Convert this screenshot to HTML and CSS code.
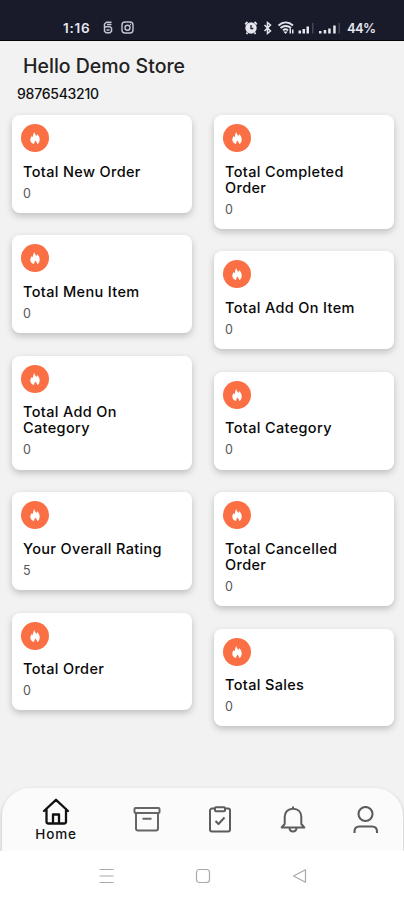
FILE: index.html
```
<!DOCTYPE html>
<html lang="en">
<head>
<meta charset="utf-8">
<title>Store dashboard</title>
<link rel="stylesheet" href="styles.css">
</head>
<body>
<svg width="0" height="0" class="defs">
  <symbol id="flame" viewBox="0 0 28 28">
    <path fill="#fff" d="M13.300 8c.4 2 1.200 2.900 2.200 4 .4-.6.500-1.200.5-1.900 1.900 1.500 2.700 3.400 2.700 5.300 0 2.300-1 3.900-2.500 4.600-.2-1.600-.8-2.600-2.100-3.500-.1 1.400-1.200 2-1 3.500-2.200-.4-3.800-2-3.800-4.200 0-1.700.7-2.900 1.700-3.900.1.700.3 1.100.7 1.400.4-2 .6-3.700 1.600-5.300z"/>
  </symbol>
</svg>
<header class="status">
  <span class="clock">1:16</span>
  <svg class="st-s" width="10" height="13" viewBox="0 0 10 13" fill="none" stroke="#c4c5d0" stroke-width="1.500"><path d="M8.500 1.200H3.500L1.500 3V5.800h5.500L8.500 7v3.300L7 11.800H3L1.500 10.300V5.800M4 3.400h4.500M3.500 9h3"/></svg>
  <svg class="st-i" width="13" height="13" viewBox="0 0 13 13" fill="none" stroke="#c4c5d0" stroke-width="1.400"><rect x="1" y="1" width="11" height="11" rx="3"/><circle cx="6.500" cy="6.800" r="2.500"/><path d="M9 3.500h1"/></svg>
  <span class="fill"></span>
  <svg class="st-right" width="98" height="16" viewBox="0 0 98 16">
    <circle cx="7" cy="8" r="5.700" fill="#e6e6ee"/>
    <path fill="none" stroke="#191b2a" stroke-width="1.300" d="M7 5v3.500h2.300"/>
    <g fill="none" stroke="#e6e6ee">
      <path stroke-width="1.800" d="M1.200 4.300 3.500 2M12.800 4.300 10.500 2M3.500 12.500l-1 1.500M10.500 12.500l1 1.500"/>
      <path stroke-width="1.500" d="M20.500 5l6 6-3 2.500v-11l3 2.500-6 6"/>
      <path stroke-width="1.800" d="M34.500 5.500c4.500-4 10-4 14.500 0M36.500 8c3-2.700 7.500-2.700 10.500 0M39 10.400c1.600-1.400 3.500-1.400 5 0"/>
    </g>
    <g fill="#e6e6ee"><path d="M39.300 11.500h4.500l-2.300 2.500z"/><path d="M45.500 8.500h1.500v5h-1.500zM48 9.500h1.500v4H48zM54.500 10.500H57v3h-2.500zM58.500 9H61v4.500h-2.500zM62.500 6.500H65v7h-2.500zM75 11h2.500v2.500H75zM79.700 10h2.500v3.500h-2.500zM84.200 8.500h2.500v5h-2.500zM89.200 5.500h2.500v8h-2.500z"/></g>
    <path fill="#454758" d="M68 3h1.500v10.500H68zM94.500 3H96v10.500h-1.500z"/>
  </svg>
  <span class="battery">44%</span>
</header>
<main>
  <h1>Hello Demo Store</h1>
  <p class="phone">9876543210</p>
  <div class="board">
    <div class="col">
      <section class="card"><svg class="ico"><use href="#flame"/></svg><h2>Total New Order</h2><p>0</p></section>
      <section class="card"><svg class="ico"><use href="#flame"/></svg><h2>Total Menu Item</h2><p>0</p></section>
      <section class="card"><svg class="ico"><use href="#flame"/></svg><h2>Total Add On<br>Category</h2><p>0</p></section>
      <section class="card"><svg class="ico"><use href="#flame"/></svg><h2>Your Overall Rating</h2><p>5</p></section>
      <section class="card"><svg class="ico"><use href="#flame"/></svg><h2>Total Order</h2><p>0</p></section>
    </div>
    <div class="col">
      <section class="card"><svg class="ico"><use href="#flame"/></svg><h2>Total Completed<br>Order</h2><p>0</p></section>
      <section class="card"><svg class="ico"><use href="#flame"/></svg><h2>Total Add On Item</h2><p>0</p></section>
      <section class="card"><svg class="ico"><use href="#flame"/></svg><h2>Total Category</h2><p>0</p></section>
      <section class="card"><svg class="ico"><use href="#flame"/></svg><h2>Total Cancelled<br>Order</h2><p>0</p></section>
      <section class="card"><svg class="ico"><use href="#flame"/></svg><h2>Total Sales</h2><p>0</p></section>
    </div>
  </div>
</main>
<nav class="tabs">
  <a class="tab home">
    <svg width="28" height="28" viewBox="0 0 28 28" fill="none" stroke="#111" stroke-width="2.300" stroke-linejoin="round" stroke-linecap="round"><path d="M2 13 14 1.800 26 13M4.500 11v12.500a2 2 0 0 0 2 2h15.500a2 2 0 0 0 2-2V11M11 25v-8.500h6V25"/></svg>
    <span>Home</span>
  </a>
  <a class="tab"><svg width="28" height="28" viewBox="0 0 28 28" fill="none" stroke="#666" stroke-width="2" stroke-linejoin="round"><rect x="1.500" y="2" width="25" height="5" rx="1"/><path d="M3 7v15.500a2 2 0 0 0 2 2h18a2 2 0 0 0 2-2V7M9.500 12.800h9"/></svg></a>
  <a class="tab"><svg width="28" height="28" viewBox="0 0 28 28" fill="none" stroke="#5c5c5c" stroke-width="2" stroke-linejoin="round"><path d="M9 2.500H6a2 2 0 0 0-2 2v19a2 2 0 0 0 2 2h16a2 2 0 0 0 2-2v-19a2 2 0 0 0-2-2H19"/><rect x="9" y="1.200" width="10" height="4" rx="1"/><path d="m9.500 15 3 3 6-6.500"/></svg></a>
  <a class="tab"><svg width="28" height="28" viewBox="0 0 28 28" fill="none" stroke="#5c5c5c" stroke-width="2" stroke-linejoin="round"><path d="M14 .5V3M5.700 18v-7C5.700 6 9 2.800 14 2.800s8.300 3.200 8.300 8.200v7l3 3.500H2.700zM10.500 21.700c.2 5 6.800 5 7 0"/></svg></a>
  <a class="tab"><svg width="28" height="28" viewBox="0 0 28 28" fill="none" stroke="#5c5c5c" stroke-width="2.100"><circle cx="13.500" cy="8" r="7"/><path d="M2.500 27v-1.500c0-3 2-5 5-5h12.500c3 0 5 2 5 5V27"/></svg></a>
</nav>
<footer class="system">
  <svg width="16" height="16" viewBox="0 0 16 16" stroke="#aaa" stroke-width="1.200"><path d="M1.500 1.500h14M1.500 8h14M1.500 14.500h14"/></svg>
  <svg width="16" height="16" viewBox="0 0 16 16" fill="none" stroke="#aaa" stroke-width="1.200"><rect x="1.500" y="1.500" width="13" height="13" rx="3"/></svg>
  <svg width="16" height="16" viewBox="0 0 16 16" fill="none" stroke="#aaa" stroke-width="1.200" stroke-linejoin="round"><path d="M13.500 1.700v12.600L1.500 8z"/></svg>
</footer>
</body>
</html>
```
FILE: styles.css
```
* { box-sizing: border-box; margin: 0; padding: 0; }
body {
  width: 404px;
  height: 900px;
  display: flex;
  flex-direction: column;
  overflow: hidden;
  background: #f2f2f2;
  font-family: Inter, "Liberation Sans", sans-serif;
  color: #111;
}
.defs { position: absolute; }
.status {
  height: 41px;
  flex: none;
  display: flex;
  align-items: center;
  padding: 15px 27px 0 63px;
  background: #191b2a;
  border-bottom: 1px solid #05060c;
  color: #e6e6ee;
  font-weight: 600;
}
.clock { width: 40px; font-size: 13.5px; letter-spacing: 0.8px; }
.st-i { margin-left: 8px; }
.fill { flex: 1; }
.st-right { margin-right: 5px; }
.battery { width: 30px; font-size: 13px; letter-spacing: -0.6px; font-weight: 600; white-space: nowrap; }
main { flex: 1; padding: 13px 10px 0 12px; }
h1 {
  padding-left: 11px;
  font-size: 19.5px;
  line-height: 24px;
  font-weight: 500;
  color: #222;
}
.phone {
  padding-left: 5px;
  margin-top: 7px;
  font-size: 14px;
  line-height: 18px;
  letter-spacing: -0.25px;
  font-weight: 550;
}
.board { display: flex; justify-content: space-between; margin-top: 12px; }
.col { width: 180px; display: flex; flex-direction: column; gap: 22.4px; }
.card {
  padding: 9px 11px 11px;
  background: #fff;
  border-radius: 8px;
  box-shadow: 0 3px 7px rgba(0, 0, 0, 0.21);
}
.ico {
  display: block;
  width: 28px;
  height: 28px;
  margin: 0 0 11.6px -2px;
  border-radius: 50%;
  background: #fb6f45;
}
h2 {
  font-size: 14.5px;
  line-height: 16px;
  letter-spacing: 0.35px;
  font-weight: 550;
  color: #080808;
  white-space: nowrap;
}
.card p { margin-top: 6px; margin-bottom: 0.4px; font-size: 12.5px; line-height: 16px; color: #555; }
.tabs {
  height: 63px;
  flex: none;
  margin: 0 1px 0 2px;
  display: flex;
  align-items: center;
  background: #fbfbfb;
  border-radius: 28px 28px 0 0;
  box-shadow: 0 2px 4px rgba(0, 0, 0, 0.22);
  padding: 0 1px 0 18px;
}
.tab { width: 73px; display: flex; flex-direction: column; align-items: center; }
.tab svg { display: block; }
.home { width: 72px; margin-right: 18px; }
.home span { font-size: 13.5px; line-height: 16px; letter-spacing: 0.8px; font-weight: 550; }
.system {
  position: relative;
  height: 49px;
  flex: none;
  display: flex;
  justify-content: space-between;
  align-items: center;
  padding: 0 96px 0 98px;
  background: #fff;
}
```
